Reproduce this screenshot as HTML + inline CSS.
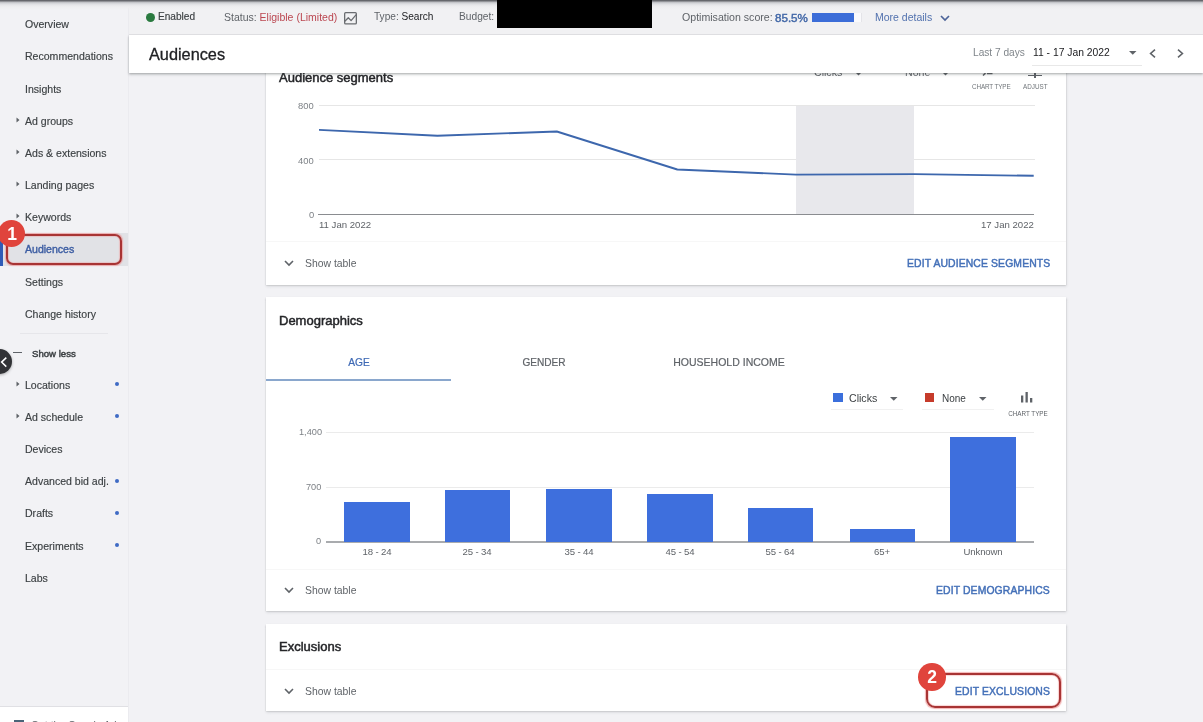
<!DOCTYPE html><html><head><meta charset='utf-8'><style>
html,body{margin:0;padding:0;width:1203px;height:722px;overflow:hidden;background:#f2f2f5;font-family:"Liberation Sans",sans-serif;}
.t{position:absolute;white-space:nowrap;line-height:1;will-change:transform;}
.r{position:absolute;}
svg{position:absolute;overflow:visible;}
</style></head><body>
<div class='r' style='left:0px;top:0px;width:128px;height:722px;background:#f2f2f5;'></div>
<div class='r' style='left:128px;top:0px;width:1px;height:722px;background:#ebebef;'></div>
<div class='r' style='left:0px;top:233px;width:128px;height:32.5px;background:#e1e2e6;'></div>
<div class='r' style='left:0px;top:233px;width:3px;height:32.5px;background:#2f5bb7;'></div>
<div class='t' style='top:19.17px;font-size:10.55px;color:#3c4043;font-weight:400;left:24.9px;-webkit-text-stroke:0.15px #3c4043;'>Overview</div>
<div class='t' style='top:51.37px;font-size:10.55px;color:#3c4043;font-weight:400;left:24.9px;-webkit-text-stroke:0.15px #3c4043;'>Recommendations</div>
<div class='t' style='top:83.57px;font-size:10.55px;color:#3c4043;font-weight:400;left:24.9px;-webkit-text-stroke:0.15px #3c4043;'>Insights</div>
<div class='t' style='top:115.77px;font-size:10.55px;color:#3c4043;font-weight:400;left:24.9px;-webkit-text-stroke:0.15px #3c4043;'>Ad groups</div>
<svg style='left:16px;top:116.80000000000001px' width='4' height='6'><path d='M0.5 0.5 L3.5 3 L0.5 5.5Z' fill='#5f6368'/></svg>
<div class='t' style='top:147.97px;font-size:10.55px;color:#3c4043;font-weight:400;left:24.9px;-webkit-text-stroke:0.15px #3c4043;'>Ads &amp; extensions</div>
<svg style='left:16px;top:149.0px' width='4' height='6'><path d='M0.5 0.5 L3.5 3 L0.5 5.5Z' fill='#5f6368'/></svg>
<div class='t' style='top:180.17px;font-size:10.55px;color:#3c4043;font-weight:400;left:24.9px;-webkit-text-stroke:0.15px #3c4043;'>Landing pages</div>
<svg style='left:16px;top:181.20000000000002px' width='4' height='6'><path d='M0.5 0.5 L3.5 3 L0.5 5.5Z' fill='#5f6368'/></svg>
<div class='t' style='top:212.37px;font-size:10.55px;color:#3c4043;font-weight:400;left:24.9px;-webkit-text-stroke:0.15px #3c4043;'>Keywords</div>
<svg style='left:16px;top:213.4px' width='4' height='6'><path d='M0.5 0.5 L3.5 3 L0.5 5.5Z' fill='#5f6368'/></svg>
<div class='t' style='top:244.27px;font-size:10.55px;color:#3d5ea3;font-weight:400;left:24.9px;-webkit-text-stroke:0.4px #3d5ea3;'>Audiences</div>
<div class='t' style='top:276.77px;font-size:10.55px;color:#3c4043;font-weight:400;left:24.9px;-webkit-text-stroke:0.15px #3c4043;'>Settings</div>
<div class='t' style='top:308.97px;font-size:10.55px;color:#3c4043;font-weight:400;left:24.9px;-webkit-text-stroke:0.15px #3c4043;'>Change history</div>
<div class='r' style='left:20px;top:333px;width:88px;height:1px;background:#e6e6ea;'></div>
<div class='r' style='left:13px;top:351.5px;width:9px;height:1.5px;background:#5f6368;'></div>
<div class='t' style='top:348.77px;font-size:9.6px;color:#3c4043;font-weight:400;left:31.9px;-webkit-text-stroke:0.45px #3c4043;'>Show less</div>
<div class='t' style='top:379.67px;font-size:10.55px;color:#3c4043;font-weight:400;left:24.9px;-webkit-text-stroke:0.15px #3c4043;'>Locations</div>
<svg style='left:16px;top:380.7px' width='4' height='6'><path d='M0.5 0.5 L3.5 3 L0.5 5.5Z' fill='#5f6368'/></svg>
<div class='r' style='left:114.7px;top:382.2px;width:4px;height:4px;border-radius:50%;background:#3f6bc4'></div>
<div class='t' style='top:411.87px;font-size:10.55px;color:#3c4043;font-weight:400;left:24.9px;-webkit-text-stroke:0.15px #3c4043;'>Ad schedule</div>
<svg style='left:16px;top:412.9px' width='4' height='6'><path d='M0.5 0.5 L3.5 3 L0.5 5.5Z' fill='#5f6368'/></svg>
<div class='r' style='left:114.7px;top:414.4px;width:4px;height:4px;border-radius:50%;background:#3f6bc4'></div>
<div class='t' style='top:444.07px;font-size:10.55px;color:#3c4043;font-weight:400;left:24.9px;-webkit-text-stroke:0.15px #3c4043;'>Devices</div>
<div class='t' style='top:476.27px;font-size:10.55px;color:#3c4043;font-weight:400;left:24.9px;-webkit-text-stroke:0.15px #3c4043;'>Advanced bid adj.</div>
<div class='r' style='left:114.7px;top:478.79999999999995px;width:4px;height:4px;border-radius:50%;background:#3f6bc4'></div>
<div class='t' style='top:508.47px;font-size:10.55px;color:#3c4043;font-weight:400;left:24.9px;-webkit-text-stroke:0.15px #3c4043;'>Drafts</div>
<div class='r' style='left:114.7px;top:511.0px;width:4px;height:4px;border-radius:50%;background:#3f6bc4'></div>
<div class='t' style='top:540.67px;font-size:10.55px;color:#3c4043;font-weight:400;left:24.9px;-webkit-text-stroke:0.15px #3c4043;'>Experiments</div>
<div class='r' style='left:114.7px;top:543.1999999999999px;width:4px;height:4px;border-radius:50%;background:#3f6bc4'></div>
<div class='t' style='top:572.87px;font-size:10.55px;color:#3c4043;font-weight:400;left:24.9px;-webkit-text-stroke:0.15px #3c4043;'>Labs</div>
<div class='r' style='left:0px;top:706px;width:128px;height:16px;background:#ffffff;border-top:1px solid #e0e0e4;'></div>
<div class='r' style='left:14px;top:719.5px;width:10px;height:2.5px;background:#4a6478;'></div>
<div class='t' style='top:721.20px;font-size:10.4px;color:#5f6368;font-weight:400;left:31px;max-width:95px;overflow:hidden;'>Get the Google Ads app</div>
<div class='r' style='left:-13.2px;top:348.9px;width:25px;height:25px;border-radius:50%;background:#323336;box-shadow:0 1px 3px rgba(0,0,0,.3)'></div>
<svg style='left:0.5px;top:356.6px' width='6' height='11'><path d='M5.3 0.6 L0.6 5.1 L5.3 9.6' stroke='#fff' stroke-width='1.5' fill='none'/></svg>
<div class='r' style='left:129px;top:0px;width:1074px;height:35px;background:#f1f1f3;border-bottom:1px solid #e3e3e6;box-sizing:border-box;'></div>
<div class='r' style='left:0px;top:0px;width:1203px;height:10px;background:linear-gradient(#5f6065 0px,#6d6e73 1px,#b8b9bd 2px,#cfd0d4 3px,#dddee1 4px,#e6e6e9 5px,#ebebed 6px,#eeeef0 7px,rgba(241,241,243,0) 10px);'></div>
<div class='r' style='left:146px;top:13.3px;width:9px;height:9px;border-radius:50%;background:#2a7a3f'></div>
<div class='t' style='top:12.45px;font-size:10.1px;color:#3c4043;font-weight:400;left:158.4px;-webkit-text-stroke:0.15px #3c4043;'>Enabled</div>
<div class='t' style='top:12.11px;font-size:10.5px;color:#5f6368;font-weight:400;left:223.5px;'>Status: <span style='color:#bb4650'>Eligible (Limited)</span></div>
<svg style='left:344.2px;top:11.9px' width='13' height='13'><rect x='0.65' y='0.65' width='11.7' height='11.3' rx='1' fill='none' stroke='#6a6d71' stroke-width='1.3'/><path d='M0.8 9.2 L4.3 5.8 L7.1 8.6 L12.2 2.6' stroke='#6a6d71' stroke-width='1.3' fill='none' stroke-linejoin='round'/></svg>
<div class='t' style='top:12.45px;font-size:10.1px;color:#5f6368;font-weight:400;left:373.8px;'>Type: <span style='color:#202124'>Search</span></div>
<div class='t' style='top:12.37px;font-size:10.2px;color:#5f6368;font-weight:400;left:459px;'>Budget:</div>
<div class='r' style='left:497px;top:0px;width:155px;height:28px;background:#000000;'></div>
<div class='t' style='top:12.03px;font-size:10.6px;color:#5f6368;font-weight:400;left:681.6px;'>Optimisation score:</div>
<div class='t' style='top:12.18px;font-size:11.6px;color:#4368a8;font-weight:400;left:775.3px;-webkit-text-stroke:0.45px #4368a8;'>85.5%</div>
<div class='r' style='left:812.2px;top:13.1px;width:48.799999999999955px;height:8.9px;background:#fafafc;border-right:1px solid #e4e4e8;'></div>
<div class='r' style='left:812.2px;top:13.1px;width:41.5px;height:8.9px;background:#3c6dd8;'></div>
<div class='t' style='top:12.11px;font-size:10.5px;color:#5171ae;font-weight:400;left:875px;'>More details</div>
<svg style='left:940px;top:15px' width='10' height='7'><path d='M1 1 L5 5 L9 1' stroke='#4d6499' stroke-width='1.7' fill='none'/></svg>
<div class='r' style='left:266px;top:40px;width:800px;height:245px;background:#ffffff;box-shadow:0 0.5px 1.5px rgba(60,64,67,.3),0 1px 3px 0.5px rgba(60,64,67,.12);'></div>
<div class='t' style='top:71.00px;font-size:13px;color:#202124;font-weight:400;left:279px;-webkit-text-stroke:0.5px #2a2b2e;'>Audience segments</div>
<div class='t' style='top:66.83px;font-size:10.6px;color:#5f6368;font-weight:400;left:814px;'>Clicks</div>
<svg style='left:855px;top:71.5px' width='8' height='4'><path d='M0 0 L7 0 L3.5 3.5Z' fill='#5f6368'/></svg>
<svg style='left:942px;top:71.5px' width='8' height='4'><path d='M0 0 L7 0 L3.5 3.5Z' fill='#5f6368'/></svg>
<div class='t' style='top:66.83px;font-size:10.6px;color:#5f6368;font-weight:400;left:905px;'>None</div>
<div class='t' style='top:83.67px;font-size:6.3px;color:#70757a;font-weight:400;letter-spacing:-0.1px;left:972.2px;'>CHART TYPE</div>
<div class='t' style='top:83.67px;font-size:6.3px;color:#70757a;font-weight:400;left:1023.1px;'>ADJUST</div>
<div class='r' style='left:1028px;top:74.8px;width:14.200000000000045px;height:1.5px;background:#5f6368;'></div>
<div class='r' style='left:1034.3px;top:73px;width:1.5px;height:4.5px;background:#5f6368;'></div>
<svg style='left:982px;top:72px' width='12' height='4'><path d='M1 3.5 L3.5 1.2 M5 1.5 L10.5 1.5' stroke='#5f6368' stroke-width='1.6' fill='none'/></svg>
<div class='r' style='left:319px;top:104.6px;width:716px;height:1.0px;background:#e6e6e6;'></div>
<div class='r' style='left:319px;top:159px;width:716px;height:1px;background:#e6e6e6;'></div>
<div class='r' style='left:795.8px;top:105.5px;width:118.70000000000005px;height:108.0px;background:#e8e8ec;'></div>
<div class='r' style='left:318px;top:213.6px;width:716px;height:1.3000000000000114px;background:#8a8c90;'></div>
<div class='t' style='top:101.24px;font-size:9.4px;color:#7d8186;font-weight:400;right:889px;'>800</div>
<div class='t' style='top:155.94px;font-size:9.4px;color:#7d8186;font-weight:400;right:889px;'>400</div>
<div class='t' style='top:210.24px;font-size:9.4px;color:#7d8186;font-weight:400;right:889px;'>0</div>
<svg style='left:0;top:0' width='1203' height='722'><path d='M319 129.9 L437.4 135.7 L556.8 131.5 L677.3 169.5 L796 174.6 L914.5 174.1 L1033.7 175.8' stroke='#3d67ad' stroke-width='1.9' fill='none' stroke-linejoin='round'/></svg>
<div class='t' style='top:220.47px;font-size:9.6px;color:#5f6368;font-weight:400;left:319px;'>11 Jan 2022</div>
<div class='t' style='top:220.47px;font-size:9.6px;color:#5f6368;font-weight:400;right:169.5px;'>17 Jan 2022</div>
<div class='r' style='left:266px;top:241px;width:800px;height:1px;background:#f7f7f7;'></div>
<svg style='left:284px;top:260px' width='10' height='7'><path d='M1 1 L5 5 L9 1' stroke='#5f6368' stroke-width='1.6' fill='none'/></svg>
<div class='t' style='top:258.80px;font-size:10.4px;color:#5f6368;font-weight:400;left:305px;'>Show table</div>
<div class='t' style='top:259.10px;font-size:10.4px;color:#4470b8;font-weight:400;letter-spacing:0.12px;right:153px;-webkit-text-stroke:0.45px #4470b8;'>EDIT AUDIENCE SEGMENTS</div>
<div class='r' style='left:129px;top:35px;width:1074px;height:38px;background:#ffffff;box-shadow:0 1px 2px rgba(60,64,67,.35),0 2px 3px rgba(60,64,67,.12);'></div>
<div class='t' style='top:45.60px;font-size:16.3px;color:#202124;font-weight:400;left:149px;-webkit-text-stroke:0.3px #202124;'>Audiences</div>
<div class='t' style='top:48.41px;font-size:10.15px;color:#80868b;font-weight:400;left:973.1px;'>Last 7 days</div>
<div class='t' style='top:48.26px;font-size:10.33px;color:#202124;font-weight:400;left:1032.7px;'>11 - 17 Jan 2022</div>
<div class='r' style='left:1032px;top:65px;width:110px;height:1px;background:#e8e8e8;'></div>
<svg style='left:1129px;top:51px' width='8' height='4'><path d='M0 0 L7.5 0 L3.75 3.8Z' fill='#5f6368'/></svg>
<svg style='left:1149px;top:49px' width='7' height='9'><path d='M6 0.7 L1.6 4.5 L6 8.3' stroke='#5f6368' stroke-width='1.6' fill='none'/></svg>
<svg style='left:1177px;top:49px' width='7' height='9'><path d='M1 0.7 L5.4 4.5 L1 8.3' stroke='#5f6368' stroke-width='1.6' fill='none'/></svg>
<div class='r' style='left:266px;top:296.8px;width:800px;height:314.49999999999994px;background:#ffffff;box-shadow:0 0.5px 1.5px rgba(60,64,67,.3),0 1px 3px 0.5px rgba(60,64,67,.12);'></div>
<div class='t' style='top:313.90px;font-size:13px;color:#202124;font-weight:400;left:278.8px;-webkit-text-stroke:0.5px #2a2b2e;'>Demographics</div>
<div class='t' style='top:358.07px;font-size:10.2px;color:#3f6ab5;font-weight:400;left:358.6px;transform:translateX(-50%);-webkit-text-stroke:0.2px #3f6ab5;'>AGE</div>
<div class='t' style='top:358.15px;font-size:10.1px;color:#5f6368;font-weight:400;left:543.6px;transform:translateX(-50%);-webkit-text-stroke:0.2px #5f6368;'>GENDER</div>
<div class='t' style='top:357.21px;font-size:10.5px;color:#5f6368;font-weight:400;left:728.7px;transform:translateX(-50%);-webkit-text-stroke:0.2px #5f6368;'>HOUSEHOLD INCOME</div>
<div class='r' style='left:266px;top:379.4px;width:185px;height:1.6000000000000227px;background:#8aa7cd;'></div>
<div class='r' style='left:833px;top:392.6px;width:9.5px;height:9.399999999999977px;background:#3b6fdc;'></div>
<div class='t' style='top:393.33px;font-size:10.6px;color:#3c4043;font-weight:400;left:849px;'>Clicks</div>
<svg style='left:890px;top:397px' width='8' height='4'><path d='M0 0 L7.5 0 L3.75 3.8Z' fill='#5f6368'/></svg>
<div class='r' style='left:831px;top:409px;width:72px;height:1px;background:#f1f1f1;'></div>
<div class='r' style='left:924.7px;top:392.6px;width:9.299999999999955px;height:9.399999999999977px;background:#c63b2b;'></div>
<div class='t' style='top:394.34px;font-size:10px;color:#3c4043;font-weight:400;left:941.7px;'>None</div>
<svg style='left:979px;top:397px' width='8' height='4'><path d='M0 0 L7.5 0 L3.75 3.8Z' fill='#5f6368'/></svg>
<div class='r' style='left:922px;top:409px;width:72px;height:1px;background:#f1f1f1;'></div>
<svg style='left:1021px;top:392px' width='12' height='11'><rect x='0' y='3.5' width='2.3' height='7' fill='#5f6368'/><rect x='4.5' y='0' width='2.3' height='10.5' fill='#5f6368'/><rect x='9' y='6' width='2.3' height='4.5' fill='#5f6368'/></svg>
<div class='t' style='top:411.47px;font-size:6.3px;color:#5f6368;font-weight:400;left:1027.5px;transform:translateX(-50%);'>CHART TYPE</div>
<div class='r' style='left:326px;top:432px;width:708px;height:1px;background:#ebebeb;'></div>
<div class='r' style='left:326px;top:486.7px;width:708px;height:1.0px;background:#ebebeb;'></div>
<div class='t' style='top:428.21px;font-size:9.2px;color:#7d8186;font-weight:400;right:881.5px;'>1,400</div>
<div class='t' style='top:482.91px;font-size:9.2px;color:#7d8186;font-weight:400;right:881.5px;'>700</div>
<div class='t' style='top:537.41px;font-size:9.2px;color:#7d8186;font-weight:400;right:881.5px;'>0</div>
<div class='r' style='left:326px;top:541.1px;width:708px;height:1.5px;background:#a9abae;'></div>
<div class='r' style='left:344px;top:502.2px;width:65.80000000000001px;height:40.19999999999999px;background:#3e6fdd;'></div>
<div class='t' style='top:546.87px;font-size:9.6px;color:#5f6368;font-weight:400;letter-spacing:-0.15px;left:376.6px;transform:translateX(-50%);'>18 - 24</div>
<div class='r' style='left:444.6px;top:490.2px;width:65.80000000000001px;height:52.19999999999999px;background:#3e6fdd;'></div>
<div class='t' style='top:546.87px;font-size:9.6px;color:#5f6368;font-weight:400;letter-spacing:-0.15px;left:477.20000000000005px;transform:translateX(-50%);'>25 - 34</div>
<div class='r' style='left:546.2px;top:489.3px;width:65.79999999999995px;height:53.099999999999966px;background:#3e6fdd;'></div>
<div class='t' style='top:546.87px;font-size:9.6px;color:#5f6368;font-weight:400;letter-spacing:-0.15px;left:578.8000000000001px;transform:translateX(-50%);'>35 - 44</div>
<div class='r' style='left:647.2px;top:493.6px;width:65.79999999999995px;height:48.799999999999955px;background:#3e6fdd;'></div>
<div class='t' style='top:546.87px;font-size:9.6px;color:#5f6368;font-weight:400;letter-spacing:-0.15px;left:679.8000000000001px;transform:translateX(-50%);'>45 - 54</div>
<div class='r' style='left:747.7px;top:507.8px;width:65.79999999999995px;height:34.599999999999966px;background:#3e6fdd;'></div>
<div class='t' style='top:546.87px;font-size:9.6px;color:#5f6368;font-weight:400;letter-spacing:-0.15px;left:780.3000000000001px;transform:translateX(-50%);'>55 - 64</div>
<div class='r' style='left:849.6px;top:529.3px;width:65.79999999999995px;height:13.100000000000023px;background:#3e6fdd;'></div>
<div class='t' style='top:546.87px;font-size:9.6px;color:#5f6368;font-weight:400;letter-spacing:-0.15px;left:882.2px;transform:translateX(-50%);'>65+</div>
<div class='r' style='left:950.1px;top:437px;width:65.79999999999995px;height:105.39999999999998px;background:#3e6fdd;'></div>
<div class='t' style='top:546.87px;font-size:9.6px;color:#5f6368;font-weight:400;letter-spacing:-0.15px;left:982.7px;transform:translateX(-50%);'>Unknown</div>
<div class='r' style='left:266px;top:569px;width:800px;height:1px;background:#f7f7f7;'></div>
<svg style='left:284px;top:587px' width='10' height='7'><path d='M1 1 L5 5 L9 1' stroke='#5f6368' stroke-width='1.6' fill='none'/></svg>
<div class='t' style='top:585.80px;font-size:10.4px;color:#5f6368;font-weight:400;left:305px;'>Show table</div>
<div class='t' style='top:585.80px;font-size:10.4px;color:#4470b8;font-weight:400;letter-spacing:0.12px;right:153px;-webkit-text-stroke:0.45px #4470b8;'>EDIT DEMOGRAPHICS</div>
<div class='r' style='left:266px;top:623.6px;width:800px;height:87.89999999999998px;background:#ffffff;box-shadow:0 0.5px 1.5px rgba(60,64,67,.3),0 1px 3px 0.5px rgba(60,64,67,.12);'></div>
<div class='t' style='top:640.20px;font-size:13px;color:#202124;font-weight:400;left:279px;-webkit-text-stroke:0.5px #2a2b2e;'>Exclusions</div>
<div class='r' style='left:266px;top:669px;width:800px;height:1px;background:#f7f7f7;'></div>
<svg style='left:284px;top:688px' width='10' height='7'><path d='M1 1 L5 5 L9 1' stroke='#5f6368' stroke-width='1.6' fill='none'/></svg>
<div class='t' style='top:687.00px;font-size:10.4px;color:#5f6368;font-weight:400;left:305px;'>Show table</div>
<div class='t' style='top:686.91px;font-size:10.38px;color:#4470b8;font-weight:400;letter-spacing:0.12px;right:153px;-webkit-text-stroke:0.45px #4470b8;'>EDIT EXCLUSIONS</div>
<div class='r' style='left:5.6px;top:233.9px;width:116.7px;height:31.1px;box-sizing:border-box;border:2.4px solid #a83434;border-radius:7px;box-shadow:0 0 1px 0.6px rgba(240,150,150,.7), inset 0 0 1px 0.6px rgba(240,150,150,.7)'></div>
<div class='r' style='left:-2.2px;top:219.5px;width:27.4px;height:27.4px;border-radius:50%;background:#e0443c'></div>
<div class='t' style='top:225.69px;font-size:17.5px;color:#ffffff;font-weight:700;left:11.5px;transform:translateX(-50%);'>1</div>
<div class='r' style='left:926.2px;top:673.4px;width:134.8px;height:34.8px;box-sizing:border-box;border:2.4px solid #a83434;border-radius:9px;box-shadow:0 0 1px 0.6px rgba(240,150,150,.7), inset 0 0 1px 0.6px rgba(240,150,150,.7)'></div>
<div class='r' style='left:918.2px;top:663px;width:27.6px;height:27.6px;border-radius:50%;background:#e0443c'></div>
<div class='t' style='top:668.99px;font-size:17.5px;color:#ffffff;font-weight:700;left:932px;transform:translateX(-50%);'>2</div>
</body></html>
